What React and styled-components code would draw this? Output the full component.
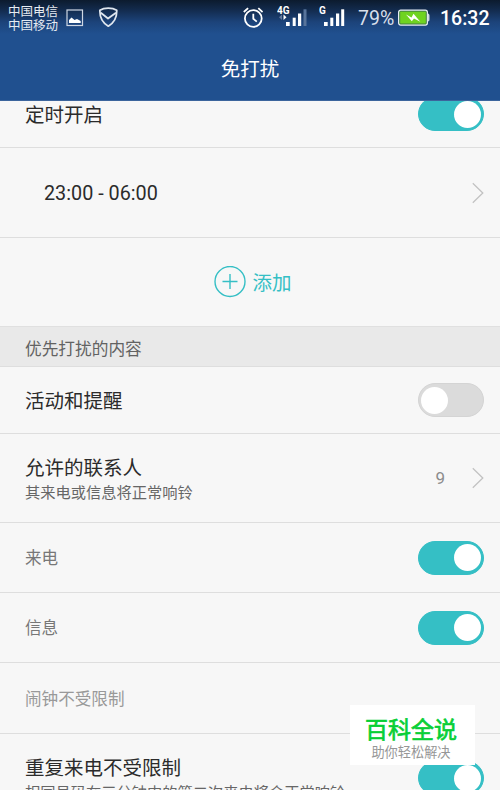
import React, { useState } from 'react';
import styled, { createGlobalStyle } from 'styled-components';

const GlobalStyle = createGlobalStyle`
  * {
    box-sizing: border-box;
  }

  body {
    margin: 0;
    overflow: hidden;
    background: #f7f7f7;
    font-family: Roboto, 'Noto Sans CJK SC', sans-serif;
  }
`;

const Screen = styled.div`
  position: relative;
  display: flex;
  flex-direction: column;
  width: 500px;
  height: 790px;
  overflow: hidden;
  background: #f7f7f7;
`;

const Header = styled.header`
  flex: none;
  height: 101px;
  background: linear-gradient(#0c1b2e 0, #12294a 9px, #1c437a 22px, #20508f 34px);
  border-bottom: 1px solid #3c659d;
  color: #fff;
`;

const StatusBar = styled.div`
  display: flex;
  align-items: center;
  height: 36px;
  padding: 0 10px 0 8px;
`;

const Carriers = styled.div`
  width: 51px;
  margin-right: 7px;
  padding-top: 2px;
  font-size: 12.5px;
  line-height: 14.5px;
  white-space: nowrap;
  color: #e6ebf2;
`;

const StatusIcon = styled.svg`
  flex: none;
  display: block;
  margin-left: ${props => props.$gap || 0}px;
`;

const Spacer = styled.div`
  flex: 1;
`;

const Percent = styled.span`
  width: 37px;
  margin-left: 9px;
  padding-top: 2px;
  font-size: 19.5px;
  line-height: 36px;
  color: #d7dfea;
`;

const Clock = styled.span`
  width: 50px;
  margin-left: 9px;
  padding-top: 2px;
  font-size: 19.5px;
  font-weight: 500;
  line-height: 36px;
  white-space: nowrap;
`;

const Title = styled.h1`
  margin: 0;
  padding-top: 2px;
  font-size: 19.5px;
  font-weight: 400;
  line-height: 64px;
  text-align: center;
`;

const List = styled.main`
  flex: 1;
  min-height: 0;
  overflow: hidden;
`;

/* The list is scrolled, so the first row starts under the header */
const ListContent = styled.div`
  margin-top: -20px;
`;

const Row = styled.div`
  display: flex;
  align-items: center;
  height: ${props => props.$height}px;
  padding: 0 16px 0 ${props => props.$indent || 25}px;
  border-bottom: 1px solid #dedede;
`;

const RowText = styled.div`
  flex: 1;
  padding-top: 3px;
`;

const Label = styled.div`
  font-size: 19.5px;
  line-height: 26px;
  color: #2b2b2b;
`;

const TimeRange = styled(Label)`
  font-size: 19.8px;
`;

const SubLabel = styled(Label)`
  font-size: 16.6px;
  color: ${props => (props.$disabled ? '#999' : '#777')};
`;

const Description = styled.div`
  font-size: 15.25px;
  line-height: 22px;
  white-space: nowrap;
  color: #666;
`;

const Count = styled.span`
  margin-right: 23px;
  font-size: 17px;
  color: #8c8c8c;
`;

const SectionTitle = styled.div`
  height: 41px;
  padding: 2px 0 0 25px;
  background: #e9e9e9;
  border-top: 1px solid #e0e0e0;
  border-bottom: 1px solid #dedede;
  font-size: 16.7px;
  line-height: 41px;
  color: #626262;
`;

const AddButton = styled.button`
  display: flex;
  align-items: center;
  justify-content: center;
  gap: 6px;
  width: 100%;
  height: 88px;
  padding: 0 0 0 6px;
  border: 0;
  background: none;
  font-family: inherit;
  font-size: 19.5px;
  color: #35bfc5;
`;

const AddText = styled.span`
  line-height: 26px;
  padding-top: 4px;
`;

const Track = styled.button`
  flex: none;
  display: flex;
  justify-content: ${props => (props.$on ? 'flex-end' : 'flex-start')};
  align-items: center;
  width: 66px;
  height: 34px;
  padding: 0 2px;
  border: 1px solid ${props => (props.$on ? '#35bfc5' : '#d4d4d4')};
  border-radius: 17px;
  background: ${props => (props.$on ? '#35bfc5' : '#dbdbdb')};
`;

const Knob = styled.span`
  width: 27px;
  height: 27px;
  border-radius: 50%;
  background: #fff;
`;

const Watermark = styled.div`
  position: absolute;
  left: 350px;
  top: 705px;
  width: 125px;
  height: 60px;
  padding-top: 11px;
  background: #fff;
  text-align: center;
`;

const WatermarkName = styled.div`
  padding-right: 3px;
  font-size: 23px;
  line-height: 30px;
  color: #08cf36;
  -webkit-text-stroke: 0.7px #08cf36;
`;

const WatermarkSlogan = styled.div`
  padding-right: 3px;
  font-size: 13.2px;
  line-height: 14px;
  color: #969696;
`;

const Toggle = ({ defaultOn }) => {
  const [on, setOn] = useState(Boolean(defaultOn));

  return (
    <Track $on={on} role="switch" aria-checked={on} onClick={() => setOn(!on)}>
      <Knob />
    </Track>
  );
};

const Chevron = () => (
  <svg width="16" height="22" viewBox="0 0 16 22" fill="none" stroke="#c2c2c2" strokeWidth="1.3">
    <path d="M4.8 1.2 L14.8 11 L4.8 20.8" />
  </svg>
);

const PictureIcon = () => (
  <StatusIcon width="18" height="18" viewBox="0 0 18 18">
    <rect x="1" y="1" width="15.5" height="15.5" fill="none" stroke="#cfd7e3" strokeWidth="1.2" />
    <path d="M3 14 V11 L5.5 8.5 L8.5 11 L11 10 L14.7 12 V14 Z" fill="#fff" />
  </StatusIcon>
);

const ShieldIcon = () => (
  <StatusIcon $gap={14} width="20" height="22" viewBox="0 0 20 22" fill="none" stroke="#dfe6ef" strokeWidth="1.8" strokeLinejoin="round">
    <path d="M10.3 1.2 C7.5 1.2 4 1.9 1.9 3.2 C1.6 10 4.7 16 10.3 19.2 C15.9 16 19 10 18.7 3.2 C16.6 1.9 13 1.2 10.3 1.2 Z" />
    <path d="M2.8 5.8 L10 11.5 L18 5.8" />
  </StatusIcon>
);

const AlarmIcon = () => (
  <StatusIcon width="20" height="22" viewBox="0 0 20 22" fill="none" stroke="#fff" strokeWidth="1.8">
    <circle cx="10.3" cy="11.5" r="8.4" />
    <path d="M10.3 6.8 V11.8 L13.8 14.6" />
    <path d="M0.8 5 L5.1 1.2 M15.3 1.2 L19.6 5" />
  </StatusIcon>
);

const SignalIcon = ({ network, data }) => (
  <StatusIcon $gap={data ? 14 : 12} width="30" height="24" viewBox="0 0 30 24" fill="#fff">
    <text x="0" y="7.8" fontSize="10" fontWeight="700">{network}</text>
    {data && (
      <>
        <path d="M5 8.5 L2 11.3 L5 14 Z" fill="#62799c" />
        <path d="M6.5 8.5 L9.5 11.3 L6.5 14 Z" />
      </>
    )}
    <rect x={data ? 9 : 5} y="16" width="3.7" height="4" />
    <rect x={data ? 15.7 : 11.3} y="11.7" width="3" height="8.3" />
    <rect x={data ? 21 : 17} y="7.5" width="3.2" height="12.5" />
    <rect x={data ? 26.5 : 22.2} y="3.3" width="3" height="16.7" fill={data ? '#58749b' : '#fff'} />
  </StatusIcon>
);

const BatteryIcon = () => (
  <StatusIcon $gap={3} width="33" height="18" viewBox="0 0 33 18">
    <rect x="0.7" y="1.2" width="28.6" height="14.8" rx="2" fill="#6fd321" stroke="#e7edf3" strokeWidth="1.4" />
    <rect x="1.7" y="2.2" width="26.6" height="12.8" rx="1" fill="none" stroke="#315d4f" strokeWidth="0.7" />
    <path d="M29.7 4.5 C31.5 4.5 31.5 5.5 31.5 8.5 C31.5 11.5 31.5 12.5 29.7 12.5" fill="#cdd8e2" />
    <path d="M8 5.5 L13.5 8.5 L15.5 4.8 L22.3 12.8 L16 9.5 L13.8 12.3 Z" fill="#fff" />
  </StatusIcon>
);

const PlusIcon = () => (
  <svg width="32" height="32" viewBox="0 0 32 32" fill="none" stroke="#35bfc5" strokeWidth="1.4">
    <circle cx="16" cy="15.5" r="15" />
    <path d="M16 8 V23 M8.5 15.5 H23.5" />
  </svg>
);

const App = () => (
  <Screen>
    <GlobalStyle />
    <Header>
      <StatusBar>
        <Carriers>
          <div>中国电信</div>
          <div>中国移动</div>
        </Carriers>
        <PictureIcon />
        <ShieldIcon />
        <Spacer />
        <AlarmIcon />
        <SignalIcon network="4G" data />
        <SignalIcon network="G" />
        <Percent>79%</Percent>
        <BatteryIcon />
        <Clock>16:32</Clock>
      </StatusBar>
      <Title>免打扰</Title>
    </Header>
    <List>
      <ListContent>
        <Row $height={67}>
          <RowText>
            <Label>定时开启</Label>
          </RowText>
          <Toggle defaultOn />
        </Row>
        <Row $height={90} $indent={44}>
          <RowText>
            <TimeRange>23:00 - 06:00</TimeRange>
          </RowText>
          <Chevron />
        </Row>
        <AddButton>
          <PlusIcon />
          <AddText>添加</AddText>
        </AddButton>
        <SectionTitle>优先打扰的内容</SectionTitle>
        <Row $height={67}>
          <RowText>
            <Label>活动和提醒</Label>
          </RowText>
          <Toggle />
        </Row>
        <Row $height={89}>
          <RowText>
            <Label>允许的联系人</Label>
            <Description>其来电或信息将正常响铃</Description>
          </RowText>
          <Count>9</Count>
          <Chevron />
        </Row>
        <Row $height={70}>
          <RowText>
            <SubLabel>来电</SubLabel>
          </RowText>
          <Toggle defaultOn />
        </Row>
        <Row $height={70}>
          <RowText>
            <SubLabel>信息</SubLabel>
          </RowText>
          <Toggle defaultOn />
        </Row>
        <Row $height={71}>
          <RowText>
            <SubLabel $disabled>闹钟不受限制</SubLabel>
          </RowText>
        </Row>
        <Row $height={89}>
          <RowText>
            <Label>重复来电不受限制</Label>
            <Description>相同号码在三分钟内的第二次来电将会正常响铃</Description>
          </RowText>
          <Toggle defaultOn />
        </Row>
      </ListContent>
    </List>
    <Watermark>
      <WatermarkName>百科全说</WatermarkName>
      <WatermarkSlogan>助你轻松解决</WatermarkSlogan>
    </Watermark>
  </Screen>
);

export default App;
